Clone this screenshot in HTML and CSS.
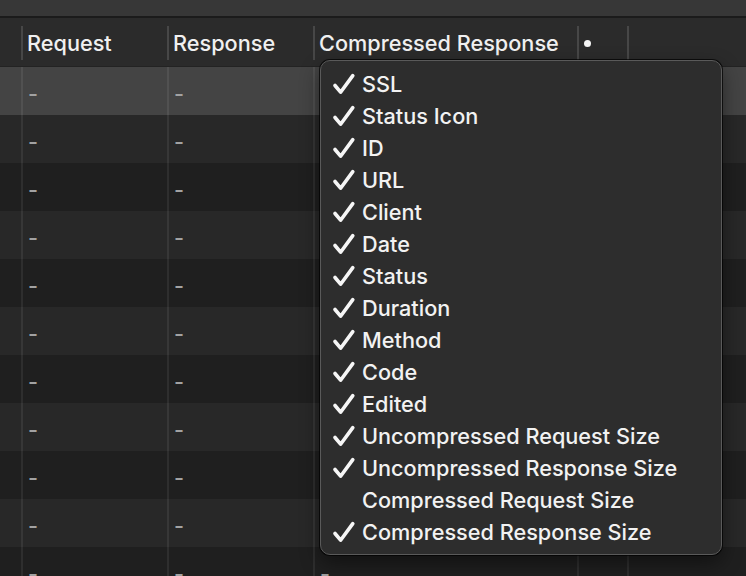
FILE: index.html
```html
<!DOCTYPE html>
<html>
<head>
<meta charset="utf-8">
<link rel="stylesheet" href="styles.css">
</head>
<body>
<div class="window">
  <div class="titlebar"></div>
  <div class="table">
    <div class="row header">
      <div class="cell c0"></div>
      <div class="cell c1"><span class="sep"></span>Request</div>
      <div class="cell c2"><span class="sep"></span>Response</div>
      <div class="cell c3"><span class="sep"></span>Compressed Response</div>
      <div class="cell c4"><span class="sep"></span><span class="dot"></span></div>
      <div class="cell c5"><span class="sep"></span></div>
    </div>
    <div class="row body sel"><div class="cell c0"></div><div class="cell c1">-</div><div class="cell c2">-</div><div class="cell c3">-</div><div class="cell c4"></div><div class="cell c5"></div></div>
    <div class="row body even"><div class="cell c0"></div><div class="cell c1">-</div><div class="cell c2">-</div><div class="cell c3">-</div><div class="cell c4"></div><div class="cell c5"></div></div>
    <div class="row body odd"><div class="cell c0"></div><div class="cell c1">-</div><div class="cell c2">-</div><div class="cell c3">-</div><div class="cell c4"></div><div class="cell c5"></div></div>
    <div class="row body even"><div class="cell c0"></div><div class="cell c1">-</div><div class="cell c2">-</div><div class="cell c3">-</div><div class="cell c4"></div><div class="cell c5"></div></div>
    <div class="row body odd"><div class="cell c0"></div><div class="cell c1">-</div><div class="cell c2">-</div><div class="cell c3">-</div><div class="cell c4"></div><div class="cell c5"></div></div>
    <div class="row body even"><div class="cell c0"></div><div class="cell c1">-</div><div class="cell c2">-</div><div class="cell c3">-</div><div class="cell c4"></div><div class="cell c5"></div></div>
    <div class="row body odd"><div class="cell c0"></div><div class="cell c1">-</div><div class="cell c2">-</div><div class="cell c3">-</div><div class="cell c4"></div><div class="cell c5"></div></div>
    <div class="row body even"><div class="cell c0"></div><div class="cell c1">-</div><div class="cell c2">-</div><div class="cell c3">-</div><div class="cell c4"></div><div class="cell c5"></div></div>
    <div class="row body odd"><div class="cell c0"></div><div class="cell c1">-</div><div class="cell c2">-</div><div class="cell c3">-</div><div class="cell c4"></div><div class="cell c5"></div></div>
    <div class="row body even"><div class="cell c0"></div><div class="cell c1">-</div><div class="cell c2">-</div><div class="cell c3">-</div><div class="cell c4"></div><div class="cell c5"></div></div>
    <div class="row body odd"><div class="cell c0"></div><div class="cell c1">-</div><div class="cell c2">-</div><div class="cell c3">-</div><div class="cell c4"></div><div class="cell c5"></div></div>
  </div>

  <div class="menu">
    <div class="item"><svg class="check" viewBox="0 0 24 22"><path d="M3 12.5 L8.6 19.2 L20.8 2.6"/></svg><span>SSL</span></div>
    <div class="item"><svg class="check" viewBox="0 0 24 22"><path d="M3 12.5 L8.6 19.2 L20.8 2.6"/></svg><span>Status Icon</span></div>
    <div class="item"><svg class="check" viewBox="0 0 24 22"><path d="M3 12.5 L8.6 19.2 L20.8 2.6"/></svg><span>ID</span></div>
    <div class="item"><svg class="check" viewBox="0 0 24 22"><path d="M3 12.5 L8.6 19.2 L20.8 2.6"/></svg><span>URL</span></div>
    <div class="item"><svg class="check" viewBox="0 0 24 22"><path d="M3 12.5 L8.6 19.2 L20.8 2.6"/></svg><span>Client</span></div>
    <div class="item"><svg class="check" viewBox="0 0 24 22"><path d="M3 12.5 L8.6 19.2 L20.8 2.6"/></svg><span>Date</span></div>
    <div class="item"><svg class="check" viewBox="0 0 24 22"><path d="M3 12.5 L8.6 19.2 L20.8 2.6"/></svg><span>Status</span></div>
    <div class="item"><svg class="check" viewBox="0 0 24 22"><path d="M3 12.5 L8.6 19.2 L20.8 2.6"/></svg><span>Duration</span></div>
    <div class="item"><svg class="check" viewBox="0 0 24 22"><path d="M3 12.5 L8.6 19.2 L20.8 2.6"/></svg><span>Method</span></div>
    <div class="item"><svg class="check" viewBox="0 0 24 22"><path d="M3 12.5 L8.6 19.2 L20.8 2.6"/></svg><span>Code</span></div>
    <div class="item"><svg class="check" viewBox="0 0 24 22"><path d="M3 12.5 L8.6 19.2 L20.8 2.6"/></svg><span>Edited</span></div>
    <div class="item"><svg class="check" viewBox="0 0 24 22"><path d="M3 12.5 L8.6 19.2 L20.8 2.6"/></svg><span>Uncompressed Request Size</span></div>
    <div class="item"><svg class="check" viewBox="0 0 24 22"><path d="M3 12.5 L8.6 19.2 L20.8 2.6"/></svg><span>Uncompressed Response Size</span></div>
    <div class="item"><span class="nocheck"></span><span>Compressed Request Size</span></div>
    <div class="item"><svg class="check" viewBox="0 0 24 22"><path d="M3 12.5 L8.6 19.2 L20.8 2.6"/></svg><span>Compressed Response Size</span></div>
  </div>
</div>
</body>
</html>
```

FILE: styles.css
```css
* { box-sizing: border-box; }
html, body {
  margin: 0;
  padding: 0;
  background: #1f1f1f;
}
body {
  width: 746px;
  height: 576px;
  overflow: hidden;
  font-family: Inter, "Noto Sans", sans-serif;
  font-size: 21.7px;
  font-weight: 500;
  color: #ececec;
}
.window {
  position: relative;
  width: 746px;
  height: 576px;
  overflow: hidden;
}
.titlebar {
  height: 18px;
  background: #373737;
  border-bottom: 2px solid #1b1b1b;
}
.table {
  display: flex;
  flex-direction: column;
}
.row {
  display: grid;
  grid-template-columns: 21px 146px 146px 264px 50px 1fr;
  height: 48px;
}
.header {
  height: 49px;
  background: #2b2b2b;
  border-bottom: 1px solid #232323;
}
.cell {
  display: flex;
  align-items: center;
  white-space: nowrap;
  overflow: hidden;
}
.header .cell {
  position: relative;
  padding-left: 6px;
  padding-top: 2px;
  color: #f0f0f0;
}
.header .c0 { padding-left: 0; }
.sep {
  position: absolute;
  left: 0;
  top: 8px;
  bottom: 6px;
  width: 2px;
  background: #474747;
}
.dot {
  width: 7px;
  height: 7px;
  margin-left: 1px;
  border-radius: 50%;
  background: #f4f4f4;
}
.body .cell {
  padding-left: 5px;
  padding-top: 5px;
  color: #a2a2a2;
  border-left: 2px solid rgba(255,255,255,0.07);
}
.body .c0 { border-left: none; }
.sel { background: #444444; }
.even { background: #282828; }
.odd { background: #1f1f1f; }

.menu {
  position: absolute;
  left: 320px;
  top: 60px;
  width: 402px;
  height: 495px;
  padding: 7px 0 6px 11px;
  background: #2d2d2d;
  border: 1px solid #5a5a5a;
  border-radius: 10px;
  box-shadow: 0 0 0 1px rgba(0,0,0,0.7), 0 8px 20px rgba(0,0,0,0.45);
  display: flex;
  flex-direction: column;
}
.item {
  height: 32px;
  display: flex;
  align-items: center;
  gap: 6px;
  color: #f2f2f2;
  white-space: nowrap;
}
.check {
  width: 24px;
  height: 22px;
  flex: none;
}
.check path {
  fill: none;
  stroke: #f6f6f6;
  stroke-width: 3.6;
  stroke-linecap: round;
  stroke-linejoin: round;
}
.nocheck {
  width: 24px;
  height: 22px;
  flex: none;
}
```
